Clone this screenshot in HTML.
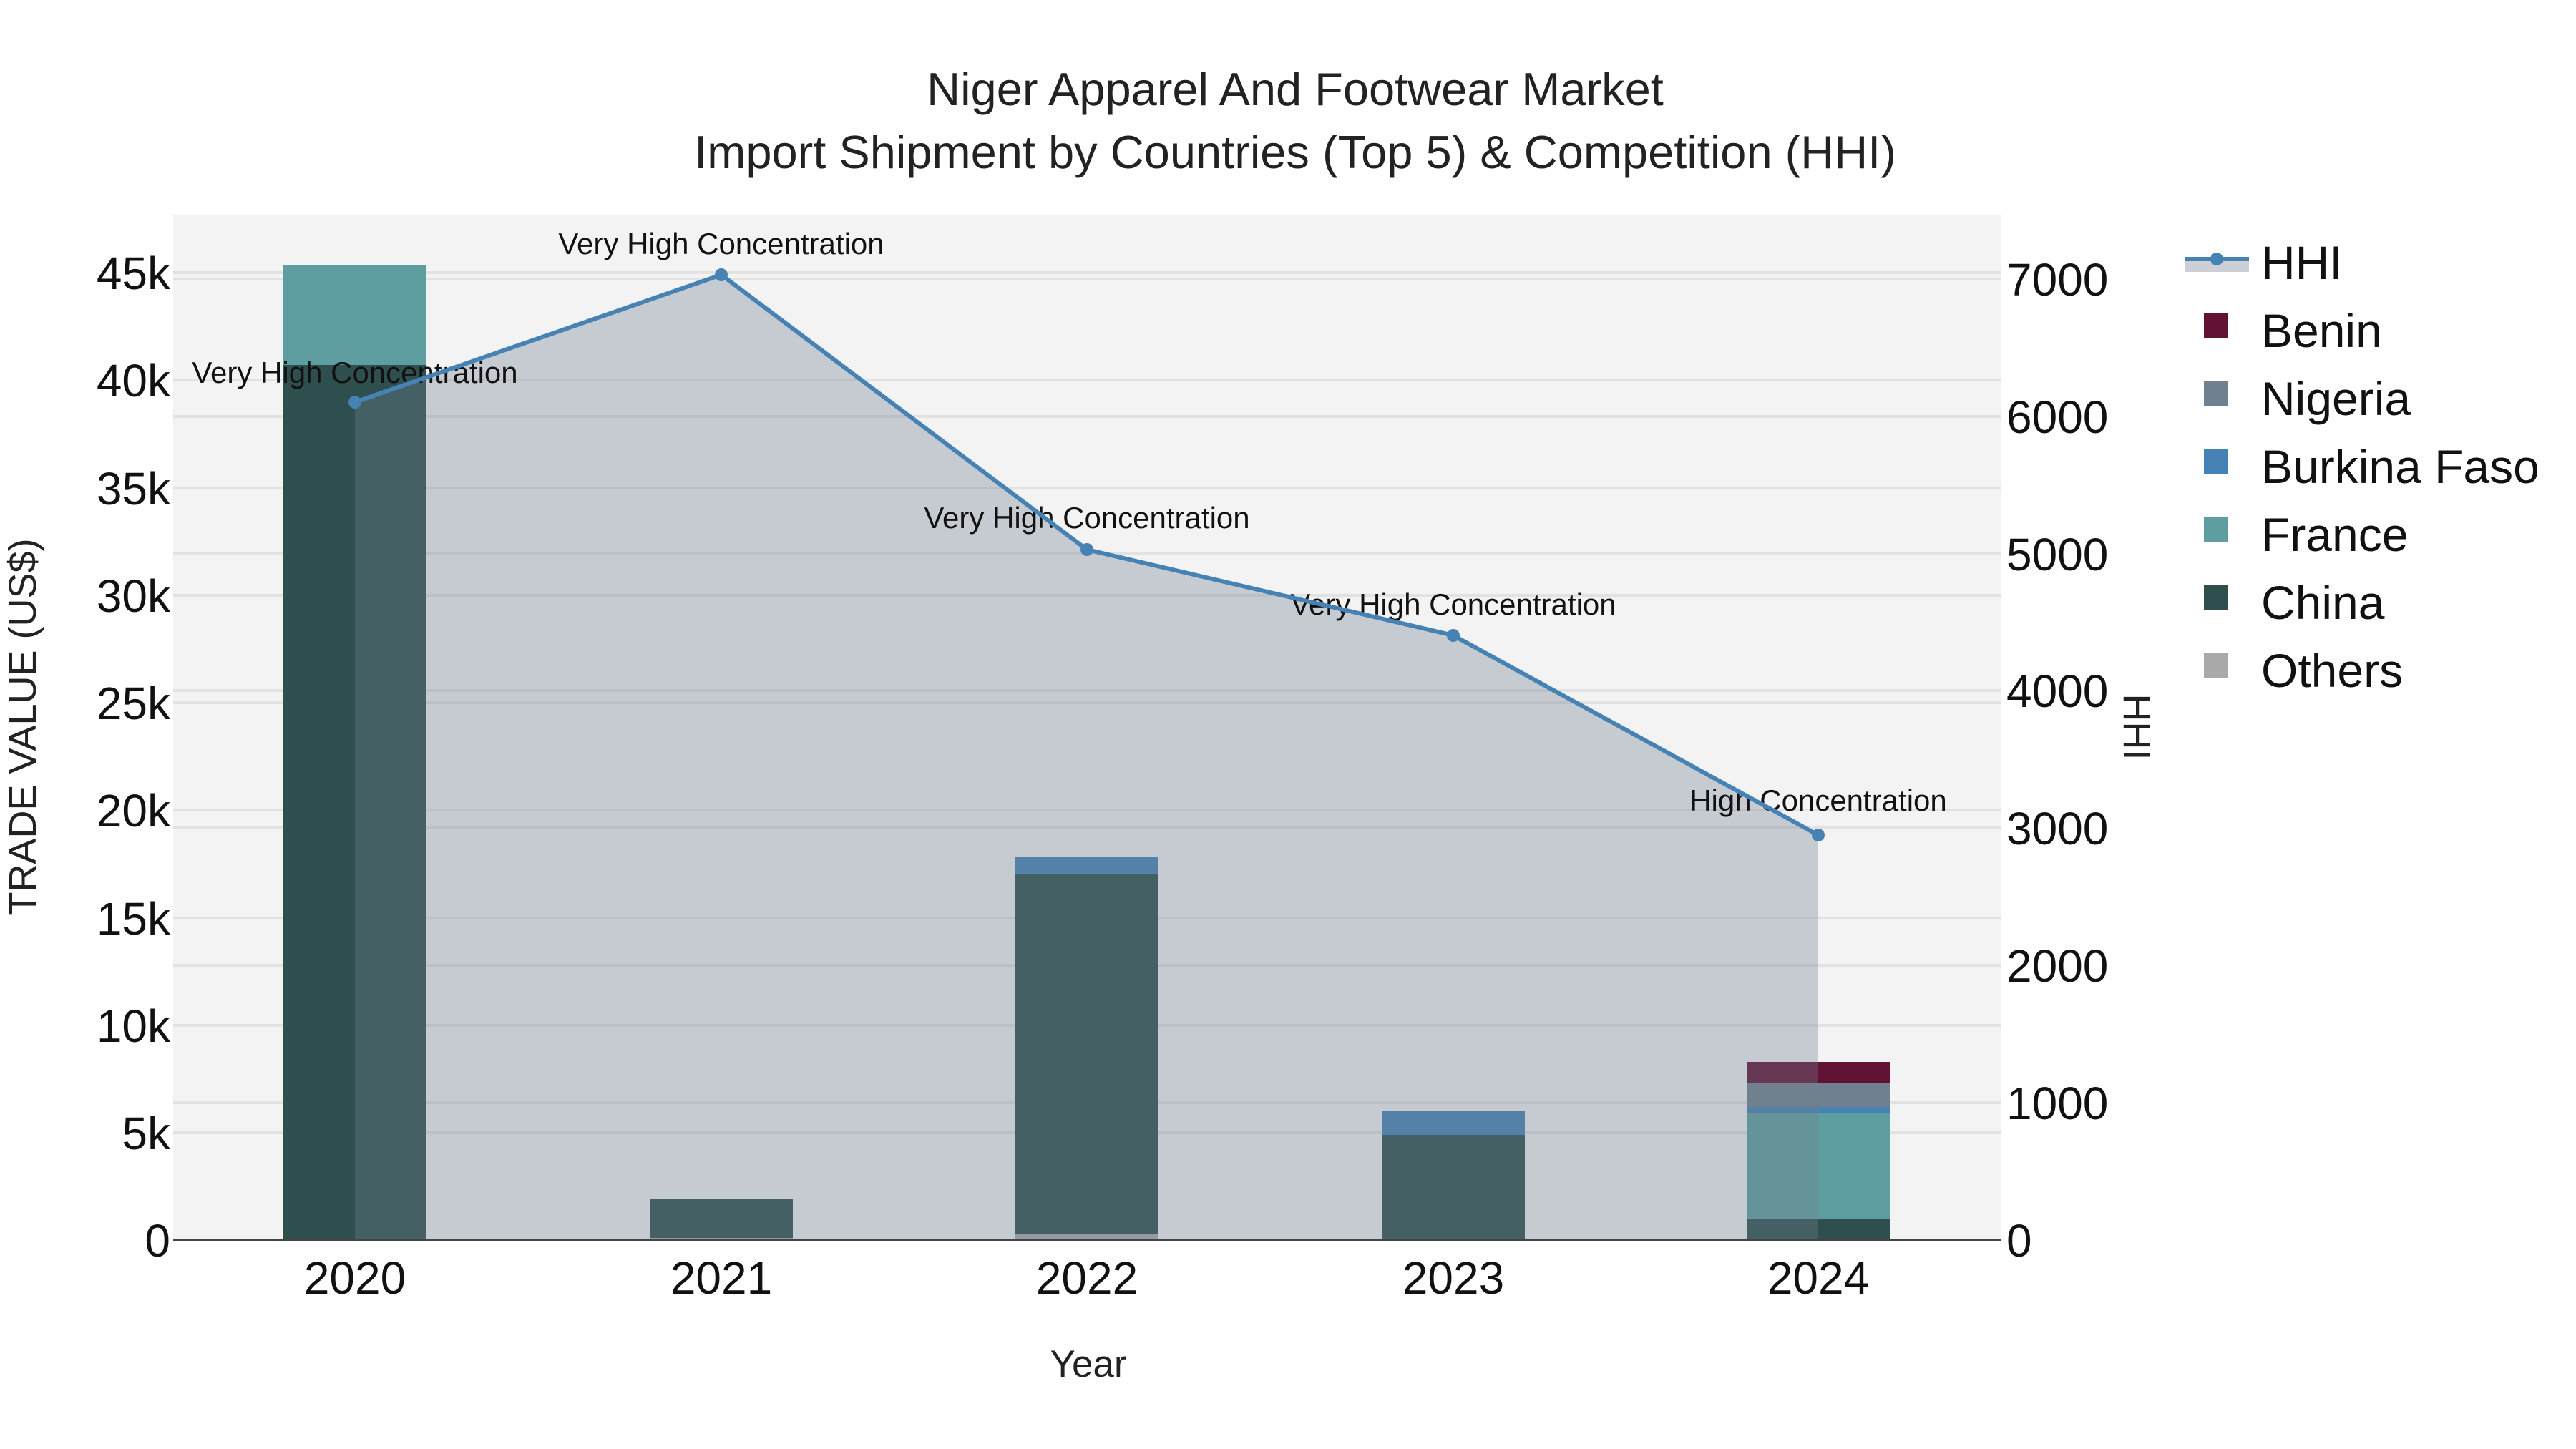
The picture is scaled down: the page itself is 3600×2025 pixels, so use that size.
<!DOCTYPE html>
<html><head><meta charset="utf-8"><style>
html,body{margin:0;padding:0;background:#fff;}
svg{display:block;font-family:"Liberation Sans",sans-serif;}
</style></head><body>
<svg width="3600" height="2025" viewBox="0 0 3600 2025" xmlns="http://www.w3.org/2000/svg">
<rect width="3600" height="2025" fill="#fff"/>
<text x="1810" y="147" font-size="65" text-anchor="middle" fill="#222">Niger Apparel And Footwear Market</text>
<text x="1810" y="235" font-size="65" text-anchor="middle" fill="#222">Import Shipment by Countries (Top 5) &amp; Competition (HHI)</text>
<rect x="242" y="300" width="2555" height="1433" fill="#f3f3f3"/>
<g stroke="#e2e2e2" stroke-width="4">
<line x1="242" x2="2797" y1="1583" y2="1583"/><line x1="242" x2="2797" y1="1433" y2="1433"/>
<line x1="242" x2="2797" y1="1283" y2="1283"/><line x1="242" x2="2797" y1="1132" y2="1132"/>
<line x1="242" x2="2797" y1="982" y2="982"/><line x1="242" x2="2797" y1="832" y2="832"/>
<line x1="242" x2="2797" y1="682" y2="682"/><line x1="242" x2="2797" y1="531" y2="531"/>
<line x1="242" x2="2797" y1="381" y2="381"/>
<line x1="242" x2="2797" y1="1541" y2="1541"/><line x1="242" x2="2797" y1="1349" y2="1349"/>
<line x1="242" x2="2797" y1="1157" y2="1157"/><line x1="242" x2="2797" y1="965" y2="965"/>
<line x1="242" x2="2797" y1="774" y2="774"/><line x1="242" x2="2797" y1="582" y2="582"/>
<line x1="242" x2="2797" y1="390" y2="390"/>
</g>
<g>
<rect x="396" y="510" width="200" height="1223" fill="#2F4F4F"/>
<rect x="396" y="371" width="200" height="139" fill="#5F9EA0"/>
<rect x="908" y="1730" width="200" height="3" fill="#A9A9A9"/>
<rect x="908" y="1675" width="200" height="55" fill="#2F4F4F"/>
<rect x="1419" y="1724" width="200" height="9" fill="#A9A9A9"/>
<rect x="1419" y="1222" width="200" height="502" fill="#2F4F4F"/>
<rect x="1419" y="1197" width="200" height="25" fill="#4682B4"/>
<rect x="1931" y="1586" width="200" height="147" fill="#2F4F4F"/>
<rect x="1931" y="1553" width="200" height="33" fill="#4682B4"/>
<rect x="2441" y="1703" width="200" height="30" fill="#2F4F4F"/>
<rect x="2441" y="1556" width="200" height="147" fill="#5F9EA0"/>
<rect x="2441" y="1547" width="200" height="9" fill="#4682B4"/>
<rect x="2441" y="1514" width="200" height="33" fill="#708090"/>
<rect x="2441" y="1484" width="200" height="30" fill="#611235"/>
</g>
<polygon points="496,1733 496,562 1008,384 1519,768 2031,888 2541,1167 2541,1733" fill="rgba(112,128,144,0.35)"/>
<line x1="242" x2="2797" y1="1733" y2="1733" stroke="#444" stroke-width="3"/>
<g font-size="42" fill="#111" text-anchor="middle">
<text x="496" y="535">Very High Concentration</text>
<text x="1008" y="355">Very High Concentration</text>
<text x="1519" y="738">Very High Concentration</text>
<text x="2031" y="859">Very High Concentration</text>
<text x="2541" y="1133">High Concentration</text>
</g>
<polyline points="496,562 1008,384 1519,768 2031,888 2541,1167" fill="none" stroke="#4682B4" stroke-width="6"/>
<g fill="#4682B4"><circle cx="496" cy="562" r="9"/><circle cx="1008" cy="384" r="9"/><circle cx="1519" cy="768" r="9"/><circle cx="2031" cy="888" r="9"/><circle cx="2541" cy="1167" r="9"/></g>
<g font-size="64" fill="#111" text-anchor="end">
<text x="238" y="1756">0</text><text x="238" y="1606">5k</text><text x="238" y="1456">10k</text>
<text x="238" y="1306">15k</text><text x="238" y="1155">20k</text><text x="238" y="1005">25k</text>
<text x="238" y="855">30k</text><text x="238" y="705">35k</text><text x="238" y="554">40k</text><text x="238" y="404">45k</text>
</g>
<g font-size="64" fill="#111">
<text x="2804" y="1756">0</text><text x="2804" y="1564">1000</text><text x="2804" y="1372">2000</text>
<text x="2804" y="1180">3000</text><text x="2804" y="988">4000</text><text x="2804" y="797">5000</text>
<text x="2804" y="605">6000</text><text x="2804" y="413">7000</text>
</g>
<g font-size="64" fill="#111" text-anchor="middle">
<text x="496" y="1808">2020</text><text x="1008" y="1808">2021</text><text x="1519" y="1808">2022</text>
<text x="2031" y="1808">2023</text><text x="2541" y="1808">2024</text>
</g>
<text x="1521" y="1924" font-size="53" fill="#222" text-anchor="middle">Year</text>
<text transform="translate(50,1016) rotate(-90)" font-size="54" fill="#222" text-anchor="middle">TRADE VALUE (US$)</text>
<text transform="translate(2968,1016) rotate(90)" font-size="54" fill="#222" text-anchor="middle">HHI</text>
<rect x="3053" y="362" width="90" height="18" fill="#ccd0d6"/>
<line x1="3053" x2="3143" y1="362" y2="362" stroke="#4682B4" stroke-width="6"/>
<circle cx="3098" cy="362" r="9" fill="#4682B4"/>
<g font-size="66" fill="#111">
<text x="3160" y="390">HHI</text>
<text x="3160" y="485">Benin</text>
<text x="3160" y="580">Nigeria</text>
<text x="3160" y="675">Burkina Faso</text>
<text x="3160" y="770">France</text>
<text x="3160" y="865">China</text>
<text x="3160" y="960">Others</text>
</g>
<rect x="3080" y="438" width="34" height="34" fill="#611235"/>
<rect x="3080" y="533" width="34" height="34" fill="#708090"/>
<rect x="3080" y="628" width="34" height="34" fill="#4682B4"/>
<rect x="3080" y="723" width="34" height="34" fill="#5F9EA0"/>
<rect x="3080" y="818" width="34" height="34" fill="#2F4F4F"/>
<rect x="3080" y="913" width="34" height="34" fill="#A9A9A9"/>
</svg>
</body></html>
